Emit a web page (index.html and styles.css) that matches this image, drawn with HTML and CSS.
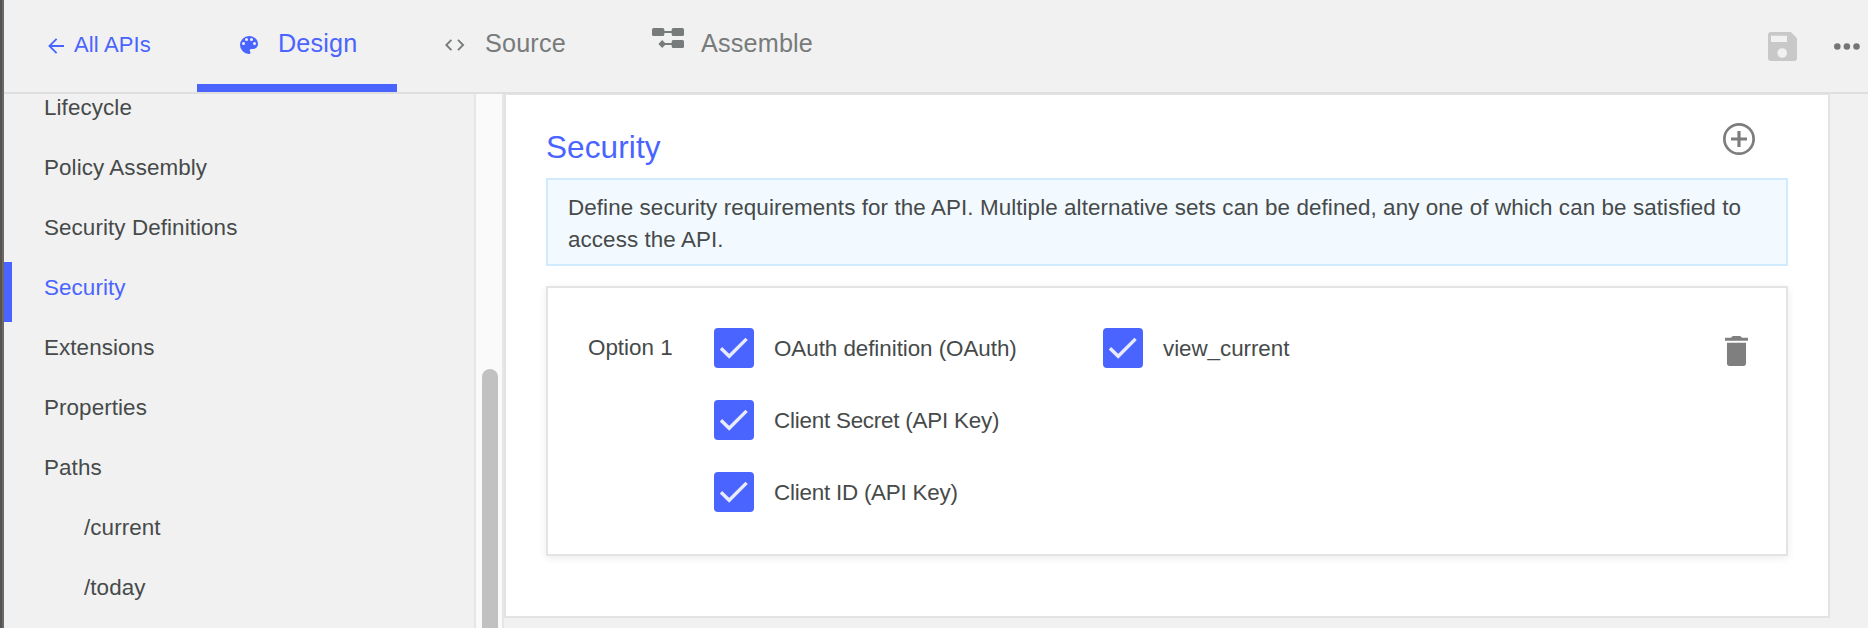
FILE: index.html
```html
<!DOCTYPE html>
<html lang="en">
<head>
<meta charset="utf-8">
<title>API Designer – Security</title>
<link rel="stylesheet" href="styles.css">
</head>
<body>
<div class="app">
  <div class="rail"></div>
  <div class="main">
    <header class="topbar">
      <a class="back">
        <svg class="back-icon" width="16" height="16" viewBox="0 0 16 16"><path d="M8.6 .8 1.4 8l7.2 7.2M1.4 8H16" fill="none" stroke="currentColor" stroke-width="1.8"/></svg>
        <span class="back-label">All APIs</span>
      </a>
      <nav class="tabs">
        <a class="tab tab-active">
          <svg class="tab-icon" width="18" height="18" viewBox="3 3 18 18"><path fill="currentColor" d="M12 3a9 9 0 0 0 0 18c.83 0 1.5-.67 1.5-1.5 0-.39-.15-.74-.39-1.01-.23-.26-.38-.61-.38-.99 0-.83.67-1.5 1.5-1.5H16c2.76 0 5-2.24 5-5 0-4.42-4.03-8-9-8zm-5.5 9a1.5 1.5 0 1 1 0-3 1.5 1.5 0 0 1 0 3zm3-4a1.5 1.5 0 1 1 0-3 1.5 1.5 0 0 1 0 3zm5 0a1.5 1.5 0 1 1 0-3 1.5 1.5 0 0 1 0 3zm3 4a1.5 1.5 0 1 1 0-3 1.5 1.5 0 0 1 0 3z"/></svg>
          <span class="tab-label">Design</span>
        </a>
        <a class="tab tab-source">
          <svg class="tab-icon" width="20" height="12" viewBox="0 0 20 12"><path d="M6.4.8 1.3 6l5.1 5.2M13 .8 18.1 6 13 11.2" fill="none" stroke="currentColor" stroke-width="1.9"/></svg>
          <span class="tab-label">Source</span>
        </a>
        <a class="tab tab-assemble">
          <svg class="tab-icon assemble-icon" width="32" height="20" viewBox="0 0 32 20"><g fill="currentColor"><rect x="0" y="0" width="12.3" height="8" rx="1.5"/><rect x="19.7" y="0" width="12.3" height="8" rx="1.5"/><rect x="12" y="3" width="8" height="2"/><rect x="19.7" y="12" width="12.3" height="8" rx="1.5"/><rect x="12" y="15" width="8" height="2"/><path d="M10.2 12 14 16l-3.800 4-3.800-4z"/></g></svg>
          <span class="tab-label">Assemble</span>
        </a>
      </nav>
      <div class="actions">
        <svg class="save" width="29" height="29" viewBox="0 0 29 29"><path fill="currentColor" fill-rule="evenodd" d="M3 0H22.800L29 6.200V26a3 3 0 0 1-3 3H3a3 3 0 0 1-3-3V3a3 3 0 0 1 3-3zM3 3.800V10H19V3.800zM14.200 16.200a4.800 4.800 0 1 0 0 9.600 4.800 4.800 0 0 0 0-9.600z"/></svg>
        <svg class="more" width="26" height="7" viewBox="0 0 26 7"><g fill="currentColor"><circle cx="3.300" cy="3.500" r="3.250"/><circle cx="12.900" cy="3.500" r="3.250"/><circle cx="22.500" cy="3.500" r="3.250"/></g></svg>
      </div>
    </header>
    <div class="body">
      <nav class="sidebar">
        <ul class="menu">
          <li class="item">Lifecycle</li>
          <li class="item">Policy Assembly</li>
          <li class="item">Security Definitions</li>
          <li class="item item-active">Security</li>
          <li class="item">Extensions</li>
          <li class="item">Properties</li>
          <li class="item">Paths</li>
          <li class="item item-sub">/current</li>
          <li class="item item-sub">/today</li>
        </ul>
      </nav>
      <div class="scroll-track"><div class="scroll-thumb"></div></div>
      <section class="panel">
        <div class="panel-head">
          <h1 class="title">Security</h1>
          <svg class="add" width="32" height="32" viewBox="2 2 20 20"><path fill="currentColor" d="M13 7h-2v4H7v2h4v4h2v-4h4v-2h-4V7zm-1-5a10 10 0 1 0 0 20 10 10 0 0 0 0-20zm0 18.300a8.300 8.300 0 1 1 0-16.600 8.300 8.300 0 0 1 0 16.600z"/></svg>
        </div>
        <p class="notice">Define security requirements for the API. Multiple alternative sets can be defined, any one of which can be satisfied to<br>access the API.</p>
        <div class="card">
          <span class="option">Option 1</span>
          <div class="schemes">
            <div class="check"><span class="box"><svg width="28" height="22" viewBox="0 0 28 22"><path class="tick" d="M1 11.300 9.200 19.300 26.600 1.900"/></svg></span><span class="check-label">OAuth definition (OAuth)</span></div>
            <div class="check"><span class="box"><svg width="28" height="22" viewBox="0 0 28 22"><path class="tick" d="M1 11.300 9.200 19.300 26.600 1.900"/></svg></span><span class="check-label check-label-tight">Client Secret (API Key)</span></div>
            <div class="check"><span class="box"><svg width="28" height="22" viewBox="0 0 28 22"><path class="tick" d="M1 11.300 9.200 19.300 26.600 1.900"/></svg></span><span class="check-label check-label-tight">Client ID (API Key)</span></div>
          </div>
          <div class="scopes">
            <div class="check"><span class="box"><svg width="28" height="22" viewBox="0 0 28 22"><path class="tick" d="M1 11.300 9.200 19.300 26.600 1.900"/></svg></span><span class="check-label">view_current</span></div>
          </div>
          <svg class="trash" width="23" height="30" viewBox="5 3 14 18" preserveAspectRatio="none"><path fill="currentColor" d="M6.200 19.500c0 .9.700 1.500 1.600 1.500h8.400c.9 0 1.600-.6 1.600-1.500V7H6.200zM19 4h-3.700c-.4-.7-.9-1-1.600-1h-3.400c-.7 0-1.200.3-1.600 1H5v1.900h14z"/></svg>
        </div>
      </section>
    </div>
  </div>
</div>
</body>
</html>
```
FILE: styles.css
```css
* { box-sizing: border-box; }
body {
  margin: 0;
  background: #f1f1f1;
  color: #464a4a;
  font: 22.4px/32px "Liberation Sans", Arial, sans-serif;
}
svg { display: block; flex: none; }
.app { display: flex; height: 628px; overflow: hidden; }
.rail { flex: none; width: 4px; background: #6b6865; border-left: 2px solid #555452; }
.main { flex: 1; display: flex; flex-direction: column; min-width: 0; }

.topbar { flex: none; display: flex; height: 94px; border-bottom: 2px solid #dfdfdf; }
.back { display: flex; width: 193px; padding-left: 44px; color: #4a64ff; }
.back-icon { margin-top: 38px; }
.back-label { margin: 29px 0 0 10px; font-size: 22px; line-height: 32px; letter-spacing: 0.15px; white-space: nowrap; }
.tabs { display: flex; color: #777b7b; }
.tab { display: flex; height: 92px; }
.tab-active { width: 200px; padding-left: 43px; border-bottom: 8px solid #4a64ff; color: #4a64ff; }
.tab-active .tab-icon { margin-top: 36px; }
.tab-label { margin: 27px 0 0 20px; font-size: 25.2px; line-height: 32px; letter-spacing: 0.18px; white-space: nowrap; }
.tab-source { width: 200px; padding-left: 48px; }
.tab-source .tab-icon { margin-top: 39px; }
.tab-source .tab-label { margin-left: 20px; }
.tab-assemble { padding-left: 55px; }
.assemble-icon { margin-top: 28px; }
.tab-assemble .tab-label { margin-left: 17px; }
.actions { display: flex; margin-left: auto; padding-right: 8px; }
.save { margin-top: 32px; color: #c8c8c8; }
.more { margin: 43px 0 0 37px; color: #757575; }

.body { flex: 1; display: flex; min-height: 0; overflow: hidden; }
.sidebar { flex: none; width: 470px; overflow: hidden; }
.menu { margin: -12px 0 0; padding: 0; list-style: none; }
.item { height: 60px; padding-left: 40px; line-height: 51px; letter-spacing: 0.09px; }
.item-active { padding-left: 32px; border-left: 8px solid #4a64ff; color: #4a64ff; }
.item-sub { padding-left: 80px; }
.scroll-track {
  flex: none;
  display: flex;
  justify-content: center;
  width: 30px;
  padding-top: 275px;
  background: #fafafa;
  border: solid #e6e6e6;
  border-width: 0 2px;
}
.scroll-thumb { width: 16px; margin-right: -2px; background: #c1c1c1; border-radius: 8px 8px 0 0; }

.panel {
  width: 1326px;
  height: 524px;
  padding: 0 40px;
  background: #fff;
  border: 2px solid #e3e3e3;
  border-top-width: 1px;
}
.panel-head { display: flex; justify-content: space-between; height: 83px; padding-right: 33px; }
.title { margin: 32px 0 0; color: #4a64ff; font-size: 31.5px; font-weight: 400; line-height: 40px; letter-spacing: 0.1px; }
.add { margin-top: 28px; color: #7d7d7d; }
.notice {
  height: 88px;
  margin: 0 0 20px;
  padding: 12px 0 0 20px;
  background: #f2f9ff;
  border: 2px solid #d0eaff;
  letter-spacing: 0.088px;
  white-space: nowrap;
}
.card {
  display: flex;
  height: 270px;
  padding: 40px 38px 0 40px;
  border: 2px solid #e4e4e4;
  box-shadow: 0 2px 8px rgba(0, 0, 0, 0.08);
}
.option { width: 126px; margin-top: 4px; }
.schemes { display: flex; flex-direction: column; gap: 32px; width: 389px; }
.check { display: flex; align-items: center; gap: 20px; height: 40px; white-space: nowrap; }
.check-label { padding-top: 2px; letter-spacing: -0.05px; }
.check-label-tight { letter-spacing: -0.22px; }
.box {
  display: flex;
  align-items: center;
  justify-content: center;
  width: 40px;
  height: 40px;
  background: #4a64ff;
  border-radius: 4px;
}
.tick { fill: none; stroke: #e8ebfd; stroke-width: 3.4; }
.trash { margin: 8px 0 0 auto; color: #7f7f7f; }
```
